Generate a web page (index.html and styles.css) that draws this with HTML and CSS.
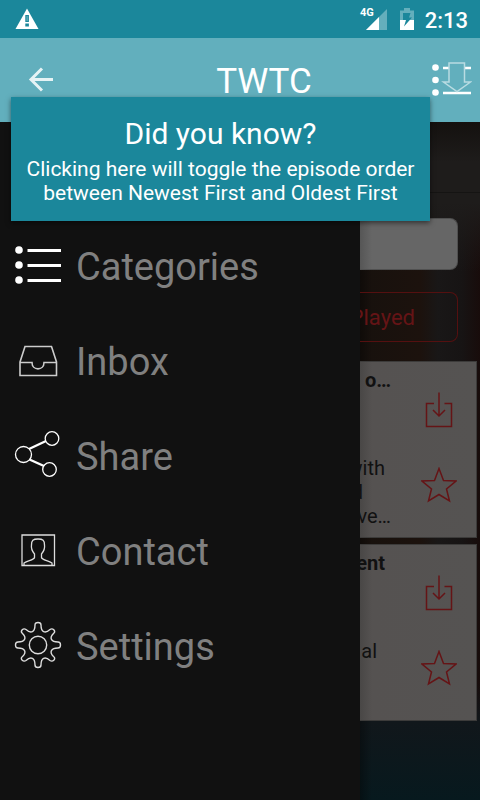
FILE: index.html
```html
<!DOCTYPE html>
<html lang="en">
<head>
    <meta charset="UTF-8">
    <meta name="viewport" content="width=device-width, initial-scale=1.0">
    <title>TWTC</title>
    <link rel="stylesheet" href="styles.css">
</head>
<body>
    <div class="status-bar">
        <svg width="24" height="22" viewBox="0 0 24 22">
            <path d="M12 0.5L23.5 21H0.5Z" fill="#fff"/>
            <path d="M10.3 7h3.6v7h-3.6zM10.3 15.5h3.6v3h-3.6z" fill="#1b879b"/>
            <path d="M11.6 8h1v5h-1z" fill="#7fbac5"/>
        </svg>
        <span class="network">4G</span>
        <svg class="signal" width="22" height="22" viewBox="0 0 22 22">
            <path d="M21 1V22H0Z" fill="#64afbc"/>
            <path d="M13 9V22H0Z" fill="#fff"/>
        </svg>
        <svg class="battery" width="14" height="22" viewBox="0 0 14 22">
            <path d="M0 2.500H4V0H10V2.500H14V12H0Z" fill="#64afbc"/>
            <path d="M0 12H14V22H0Z" fill="#fff"/>
            <path d="M3 5H10.500L9 9.500H12L4 18.500L6 12H3Z" fill="#1b879b"/>
        </svg>
        <span class="clock">2:13</span>
    </div>

    <header class="app-bar">
        <button aria-label="Back">
            <svg width="26" height="26" viewBox="0 0 26 26" fill="none" stroke="#e6f3f5" stroke-width="3">
                <path d="M25 12.500H4M14 1.500L3 12.500L14 23.500"/>
            </svg>
        </button>
        <h1>TWTC</h1>
        <button aria-label="Episode order">
            <svg width="40" height="36" viewBox="0 0 40 36" fill="none">
                <g fill="#fff"><circle cx="3.500" cy="5.500" r="3.300"/><circle cx="3.500" cy="18" r="3.300"/><circle cx="3.500" cy="30.500" r="3.300"/></g>
                <path d="M11 6h6M33 6h6M11 31h28" stroke="#fff" stroke-width="2.500"/>
                <path d="M17 1H32.500V20H38.500L25 29.500L11.500 20H17Z" stroke="#b9dce2" stroke-width="1.500"/>
            </svg>
        </button>
        <div class="tooltip" role="tooltip">
            <h2>Did you know?</h2>
            <p>Clicking here will toggle the episode order between Newest First and Oldest First</p>
        </div>
    </header>

    <main>
        <nav class="drawer">
            <a href="#">
                <svg width="48" height="48" viewBox="0 0 48 48" fill="#fff">
                    <circle cx="5" cy="9" r="3.800"/><circle cx="5" cy="24" r="3.800"/><circle cx="5" cy="39" r="3.800"/>
                    <path d="M13.500 8h33.500v3h-33.500zM13.500 23h33.500v3h-33.500zM13.500 38h33.500v3h-33.500z"/>
                </svg>
                Categories
            </a>
            <a href="#">
                <svg width="48" height="48" viewBox="0 0 48 48" fill="none" stroke="#ccc" stroke-width="1.600">
                    <path d="M6 26L11 10.500H37.500L42.500 26V39.500H6ZM6 26.500H18C18 35 30 35 30 26.500H42.500"/>
                </svg>
                Inbox
            </a>
            <a href="#">
                <svg width="48" height="48" viewBox="0 0 48 48" fill="none" stroke="#fff" stroke-width="1.300">
                    <circle cx="9.500" cy="23.500" r="8"/><circle cx="38" cy="7.500" r="6.800"/><circle cx="35.500" cy="38.500" r="6.800"/>
                    <path d="M15 18L32 10M15.500 28.500L30 35" stroke-width="2.400"/>
                </svg>
                Share
            </a>
            <a href="#">
                <svg width="48" height="48" viewBox="0 0 48 48" fill="none" stroke="#ddd" stroke-width="1.300">
                    <path d="M8 9H40.500V39.500H8Z"/>
                    <path d="M10 39.500V37C14 34.500 20 34 20.500 31.500V28C18 25 17 22 17.500 19C17.500 14.500 19 13 24 13C29 13 30.500 14.500 30.500 19C31 22 30 25 27.500 28V31.500C28 34 34 34.500 38 37V39.500"/>
                </svg>
                Contact
            </a>
            <a href="#">
                <svg width="48" height="48" viewBox="0 0 48 48" fill="none" stroke="#ddd" stroke-width="1.400">
                    <circle cx="24" cy="24" r="8.700"/>
                    <path d="M21 4Q21 1.500 24 1.500Q27 1.500 27 4C27 11 31 13 36 8.500Q38 7 40 9Q41.500 11 39.500 12.500C35 17 37 21 44 21Q46.500 21 46.500 24Q46.500 27 44 27C37 27 35 31 39.500 35.500Q41.500 37 40 39Q38 41 36 39.500C31 35 27 37 27 44Q27 46.500 24 46.500Q21 46.500 21 44C21 37 17 35 12 39.500Q10 41 8 39Q6.500 37 8.500 35.500C13 31 11 27 4 27Q1.500 27 1.500 24Q1.500 21 4 21C11 21 13 17 8.500 12.500Q6.500 11 8 9Q10 7 12 8.500C17 13 21 11 21 4Z"/>
                </svg>
                Settings
            </a>
        </nav>

        <section class="episodes">
            <div class="heading"></div>
            <input class="search" type="text" aria-label="Search episodes">
            <button class="filter">Played</button>

            <article class="card">
                <div class="card-text">
                    <h3 class="wide">e o…</h3>
                    <p class="description">with</p>
                    <p class="short">d</p>
                    <p class="wide">ve…</p>
                </div>
                <div class="card-actions">
                    <button aria-label="Download">
                        <svg width="36" height="36" viewBox="0 0 36 36" fill="none" stroke="#651416" stroke-width="1.500">
                            <path d="M13 11.500H5.500V34.500H30.500V11.500H23.500M18 0.500V24M12 18L18 24L24 18"/>
                        </svg>
                    </button>
                    <button aria-label="Favourite">
                        <svg width="36" height="36" viewBox="0 0 36 36" fill="none" stroke="#651416" stroke-width="1.500">
                            <path d="M18 1.500L22.500 13.500L35 14L25.500 22L28.500 34L18 27.500L7.500 34L10.500 22L1 14L13.500 13.500Z"/>
                        </svg>
                    </button>
                </div>
            </article>

            <article class="card">
                <div class="card-text">
                    <h3>ent</h3>
                    <p class="description narrow">al</p>
                </div>
                <div class="card-actions">
                    <button aria-label="Download">
                        <svg width="36" height="36" viewBox="0 0 36 36" fill="none" stroke="#651416" stroke-width="1.500">
                            <path d="M13 11.500H5.500V34.500H30.500V11.500H23.500M18 0.500V24M12 18L18 24L24 18"/>
                        </svg>
                    </button>
                    <button aria-label="Favourite">
                        <svg width="36" height="36" viewBox="0 0 36 36" fill="none" stroke="#651416" stroke-width="1.500">
                            <path d="M18 1.500L22.500 13.500L35 14L25.500 22L28.500 34L18 27.500L7.500 34L10.500 22L1 14L13.500 13.500Z"/>
                        </svg>
                    </button>
                </div>
            </article>
        </section>
    </main>
</body>
</html>
```
FILE: styles.css
```css
* {
    box-sizing: border-box;
}
body {
    display: flex;
    flex-direction: column;
    min-height: 100vh;
    margin: 0;
    background-color: #111;
    font-family: Roboto, sans-serif;
}
h1, h2, h3, p {
    margin: 0;
    font-weight: 400;
}
button {
    padding: 0;
    border: none;
    background: none;
    font-family: inherit;
    cursor: pointer;
}
svg {
    display: block;
    flex-shrink: 0;
}

/* Status bar */
.status-bar {
    display: flex;
    align-items: center;
    height: 38px;
    padding: 0 12px 0 15px;
    background-color: #1b879b;
    color: #fff;
}
.network {
    margin-left: auto;
    padding-bottom: 12px;
    font-size: 11px;
    line-height: 12px;
    font-weight: 700;
}
.signal {
    margin-left: -8px;
}
.battery {
    margin-left: 12px;
}
.clock {
    margin-left: 11px;
    padding-top: 2px;
    font-size: 22px;
    font-weight: 500;
}

/* App bar */
.app-bar {
    position: relative;
    z-index: 2;
    display: flex;
    align-items: center;
    justify-content: space-between;
    height: 84px;
    padding: 0 8px 0 28px;
    background-color: #62afbd;
    color: #fff;
}
.app-bar h1 {
    padding: 4px 0 0 42px;
    font-size: 35px;
    line-height: 42px;
}
.tooltip {
    position: absolute;
    top: 59px;
    left: 11px;
    right: 50px;
    padding: 18px 12px 16px;
    background-color: #1b879b;
    box-shadow: 0 2px 5px rgba(0, 0, 0, 0.5);
    text-align: center;
}
.tooltip h2 {
    margin-bottom: 4px;
    font-size: 30px;
    line-height: 38px;
}
.tooltip p {
    font-size: 21px;
    line-height: 24px;
}

/* Drawer and the dimmed page beside it */
main {
    display: flex;
    flex: 1;
}
.drawer {
    flex: 0 0 75%;
    padding-top: 97px;
    background-color: #111;
}
.drawer a {
    display: flex;
    align-items: center;
    gap: 14px;
    height: 95px;
    padding-left: 14px;
    color: #808080;
    font-size: 38px;
    text-decoration: none;
}
.drawer svg {
    margin-bottom: 4px;
}
.episodes {
    flex: 1;
    min-width: 0;
    overflow: hidden;
    background:
        linear-gradient(90deg, rgba(0, 0, 0, 0.35), transparent 12px),
        linear-gradient(180deg, #14110f, #1e1c1b 40px, #1e1c1b 80px, transparent 150px, transparent 560px, #11171b 600px, #07191e),
        linear-gradient(90deg, #17110d, #1c120d 50%, #191717 65%, #171414 85%, #180c0b);
}
.heading {
    height: 71px;
    border-bottom: 1px solid #151413;
}
.search {
    display: block;
    width: calc(100% - 22px);
    height: 52px;
    margin: 25px 0 22px;
    border: 1px solid #505050;
    border-left: none;
    border-radius: 0 8px 8px 0;
    background: linear-gradient(90deg, #565656, #666 12px);
}
.filter {
    display: flex;
    align-items: center;
    justify-content: flex-end;
    width: calc(100% - 22px);
    height: 50px;
    margin-bottom: 19px;
    padding-right: 42px;
    border: 1px solid #551010;
    border-left: none;
    border-radius: 0 8px 8px 0;
    color: #651416;
    font-size: 22px;
}
.card {
    display: flex;
    height: 177px;
    margin: 0 3px 6px 0;
    border: 1px solid #3c3b3a;
    border-left: none;
    background: linear-gradient(90deg, #494746, #555251 12px, #555352);
}
.card-text {
    display: flex;
    flex: 1;
    flex-direction: column;
    align-items: flex-end;
    min-width: 0;
    padding-top: 6px;
    color: #111;
    font-size: 20px;
    line-height: 24px;
    white-space: nowrap;
}
.card-text h3,
.card-text p {
    padding-right: 36px;
}
.card-text h3 {
    font-size: 20px;
    font-weight: 700;
}
.card-text .description {
    margin-top: 64px;
}
.card-text .wide {
    padding-right: 30px;
}
.card-text .narrow {
    padding-right: 44px;
}
.card-text .short {
    padding-right: 58px;
}
.card-actions {
    display: flex;
    flex-direction: column;
    gap: 39px;
    padding: 30px 19px 0 0;
}
```
